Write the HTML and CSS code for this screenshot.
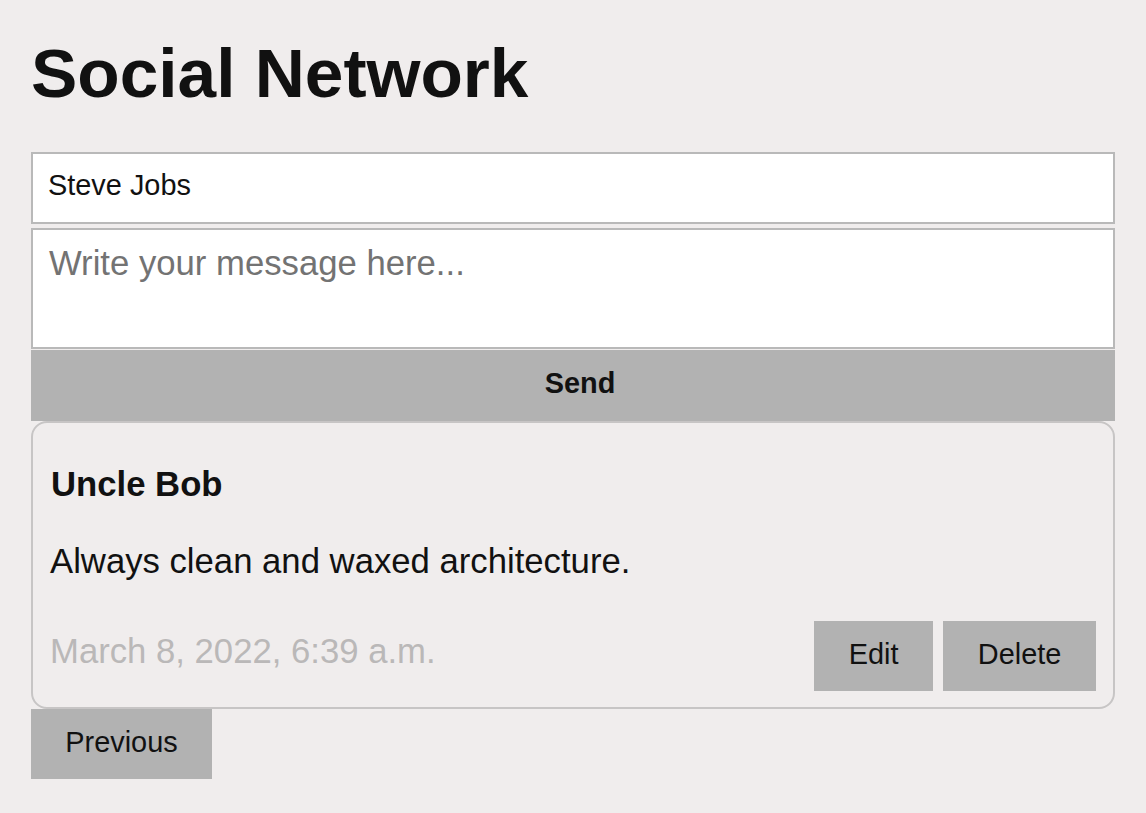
FILE: index.html
```html
<!DOCTYPE html>
<html lang="en">
<head>
<meta charset="utf-8">
<title>Social Network</title>
<link rel="stylesheet" href="styles.css">
</head>
<body>
<main class="page">
  <h1 class="title">Social Network</h1>
  <form class="composer">
    <input class="name-input" type="text" value="Steve Jobs">
    <textarea class="message-input" placeholder="Write your message here..."></textarea>
    <button class="send-btn" type="button">Send</button>
  </form>
  <section class="posts">
    <article class="post">
      <p class="post-author">Uncle Bob</p>
      <p class="post-body">Always clean and waxed architecture.</p>
      <div class="post-footer">
        <span class="post-date">March 8, 2022, 6:39 a.m.</span>
        <div class="post-actions">
          <button class="btn" type="button">Edit</button>
          <button class="btn" type="button">Delete</button>
        </div>
      </div>
    </article>
  </section>
  <nav class="pager">
    <button class="btn pager-btn" type="button">Previous</button>
  </nav>
</main>
</body>
</html>
```

FILE: styles.css
```css
* {
  box-sizing: border-box;
}

html, body {
  margin: 0;
  padding: 0;
  background: #f0eded;
}

body {
  font-family: "Liberation Sans", Arial, Helvetica, sans-serif;
  color: #111;
}

.page {
  padding: 0 31px;
  display: flex;
  flex-direction: column;
}

.title {
  margin: 34px 0 40px;
  font-size: 69.4px;
  line-height: 78px;
  font-weight: 700;
  color: #111;
}

.composer {
  display: flex;
  flex-direction: column;
  margin: 0;
}

.name-input {
  height: 72px;
  border: 2px solid #b9b9b9;
  background: #fff;
  padding: 0 15px 6px;
  font-family: inherit;
  font-size: 28.9px;
  color: #111;
  outline: none;
  margin: 0 0 4px;
}

.message-input {
  height: 121px;
  border: 2px solid #b9b9b9;
  background: #fff;
  padding: 13px 16px 0;
  font-family: inherit;
  font-size: 34.7px;
  line-height: 40px;
  color: #111;
  resize: none;
  outline: none;
  margin: 0 0 1px;
  display: block;
}

.message-input::placeholder {
  color: #737373;
  opacity: 1;
}

.send-btn {
  height: 71px;
  border: none;
  background: #b2b2b2;
  font-family: inherit;
  font-size: 28.9px;
  font-weight: 700;
  color: #111;
  padding: 0 0 4px 14px;
  margin: 0;
}

.posts {
  display: flex;
  flex-direction: column;
}

.post {
  border: 2px solid #c7c5c5;
  border-radius: 16px;
  padding: 41px 17px 16px 17px;
  height: 288px;
}

.post-author {
  margin: 0;
  font-size: 34.7px;
  line-height: 40px;
  font-weight: 700;
  padding-left: 1px;
}

.post-body {
  margin: 37px 0 40px;
  font-size: 34.7px;
  line-height: 40px;
}

.post-footer {
  display: flex;
  align-items: center;
  justify-content: space-between;
}

.post-date {
  font-size: 34.7px;
  line-height: 40px;
  color: #bab8b8;
  padding-bottom: 10px;
}

.post-actions {
  display: flex;
  gap: 10px;
}

.btn {
  height: 70px;
  border: none;
  background: #b2b2b2;
  font-family: inherit;
  font-size: 28.9px;
  color: #111;
  padding: 0 34.7px 4px;
  margin: 0;
}

.pager {
  display: flex;
}

.pager-btn {
  width: 181px;
  padding: 0 0 4px;
}
```
